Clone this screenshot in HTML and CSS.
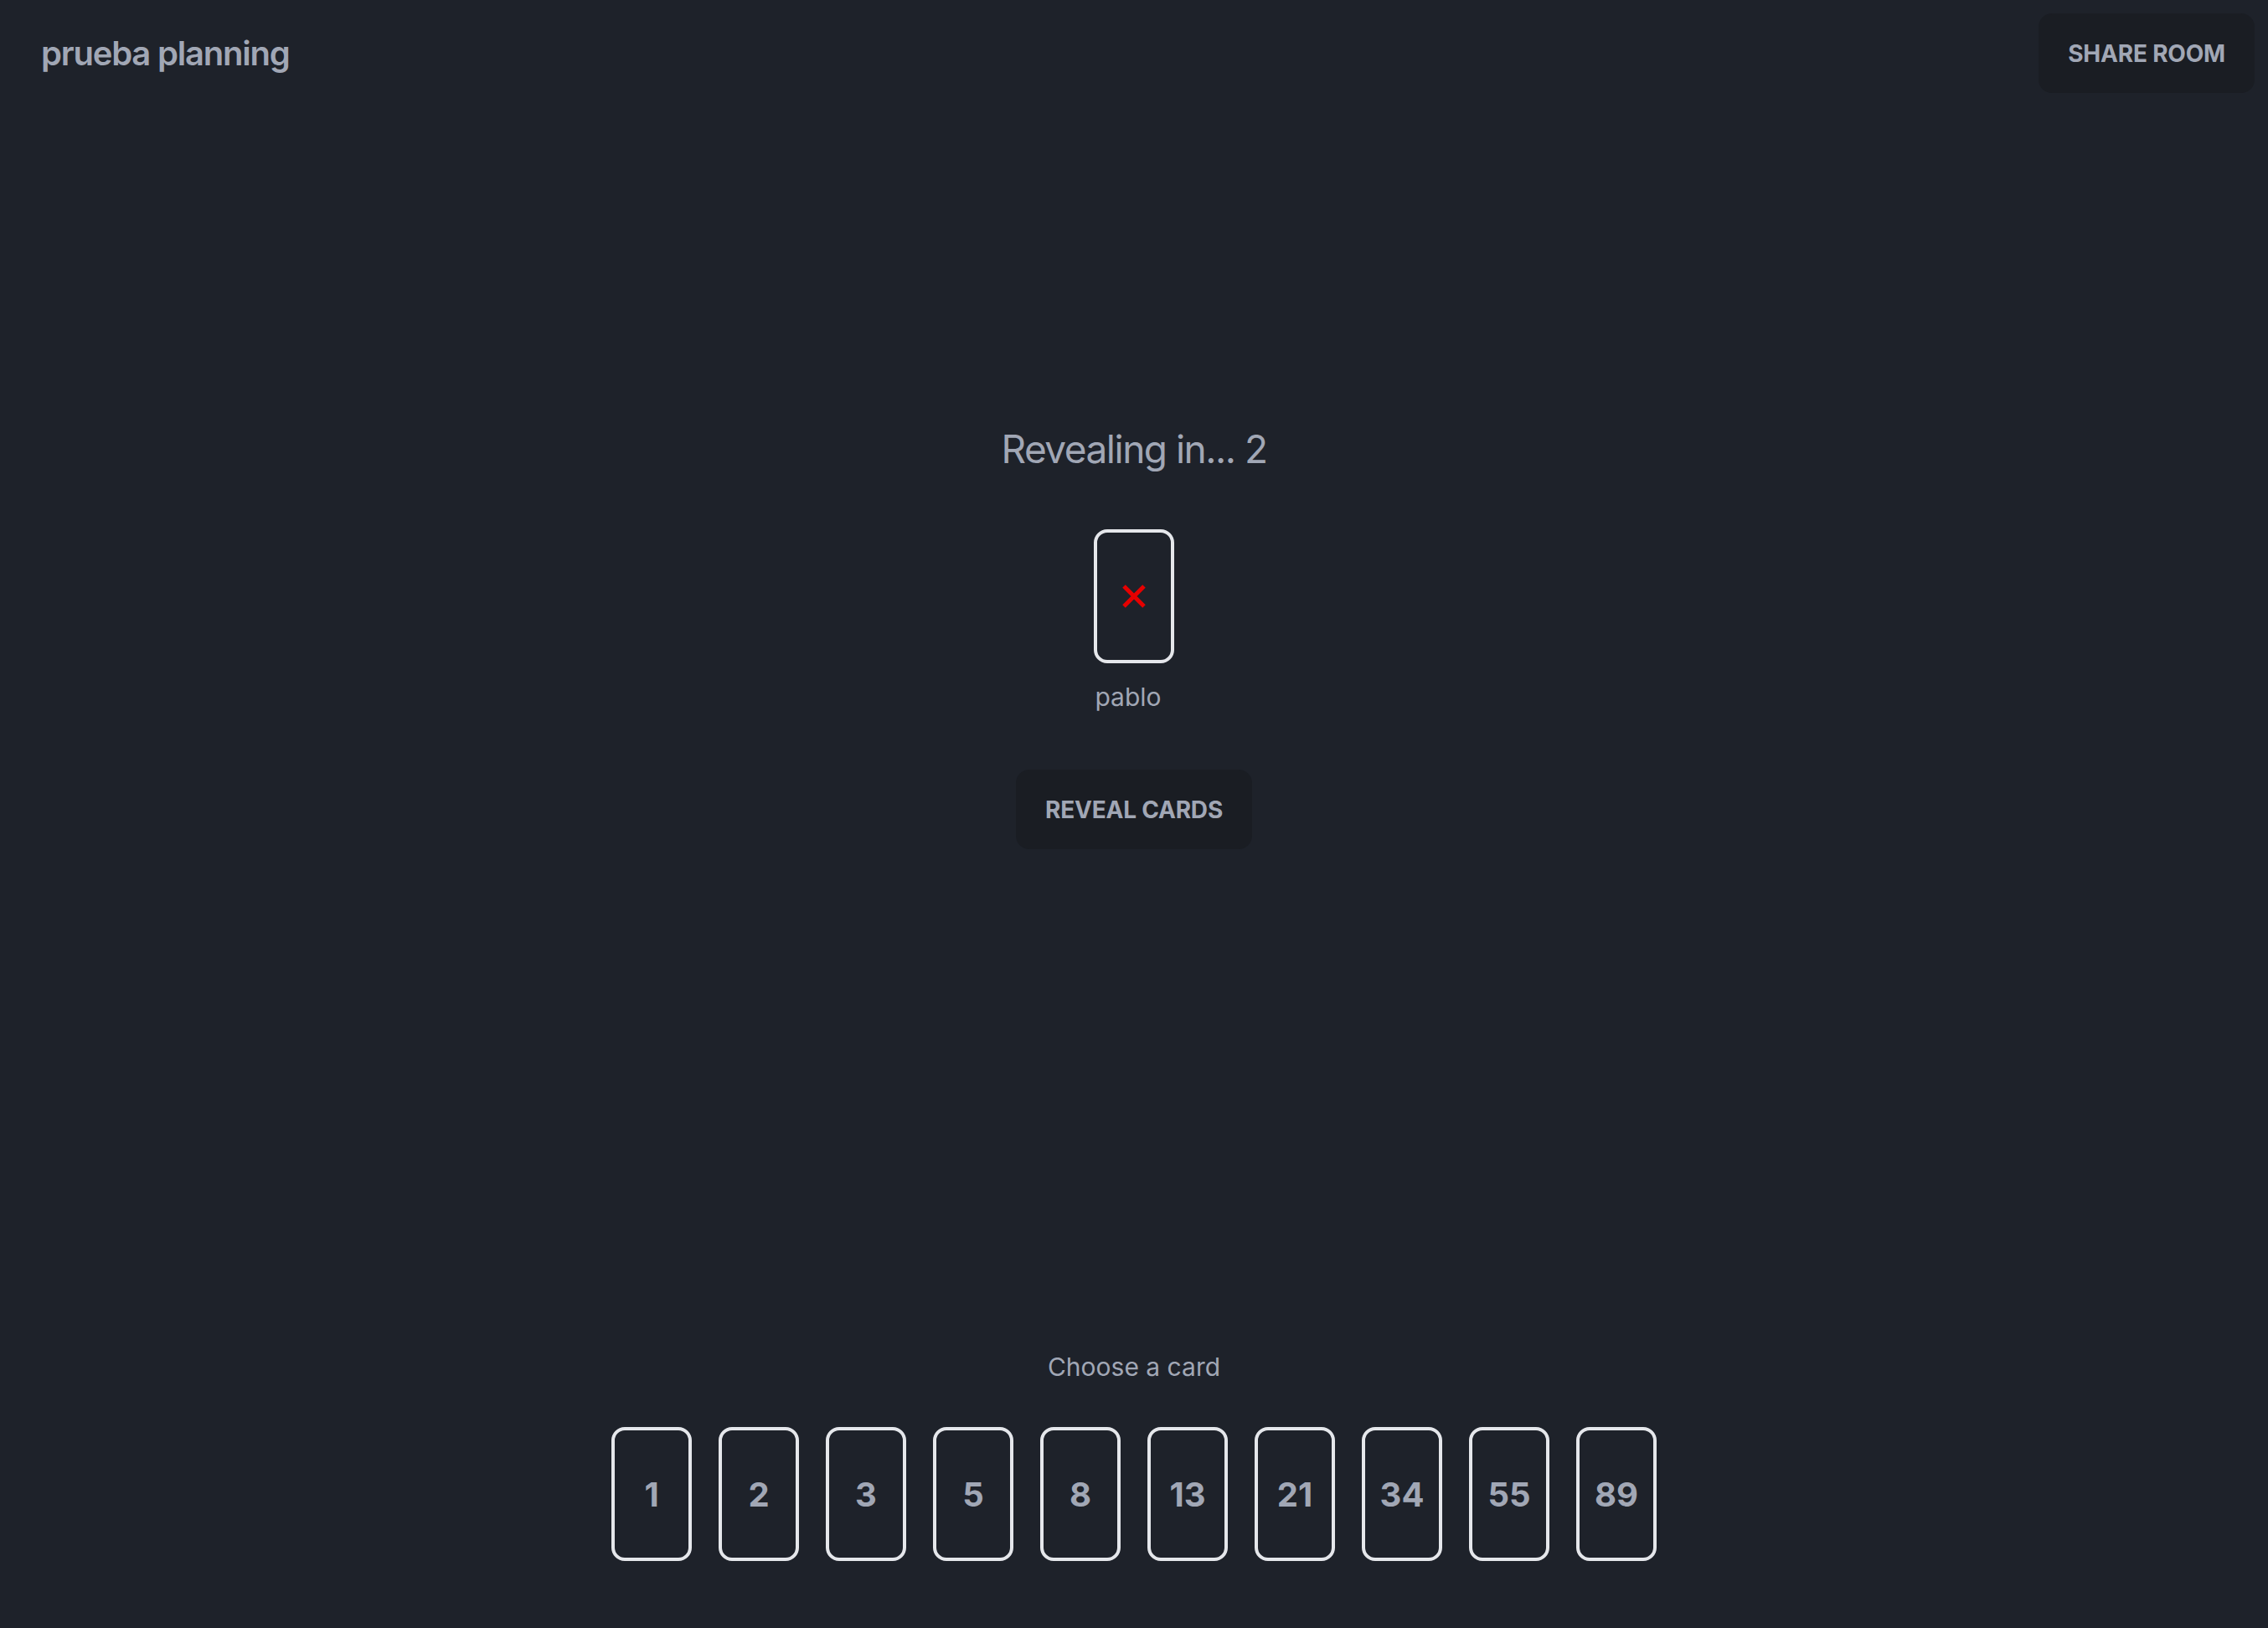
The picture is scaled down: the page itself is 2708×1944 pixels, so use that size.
FILE: index.html
```html
<!DOCTYPE html>
<html lang="es">
<head>
<meta charset="utf-8">
<title>prueba planning</title>
<link rel="stylesheet" href="styles.css">
</head>
<body>
<div class="app">
  <header class="topbar">
    <h1 class="room-title">prueba planning</h1>
    <button class="btn">SHARE ROOM</button>
  </header>
  <main class="table">
    <h2 class="status">Revealing in... 2</h2>
    <div class="player">
      <div class="card card--voted">
        <svg class="x-icon" viewBox="0 0 32 32" width="32" height="32" aria-hidden="true">
          <path d="M4 4 L28 28 M28 4 L4 28" stroke="#e60000" stroke-width="5" fill="none"/>
        </svg>
      </div>
      <span class="player-name">pablo</span>
    </div>
    <button class="btn btn--reveal">REVEAL CARDS</button>
  </main>
  <footer class="deck">
    <p class="deck-label">Choose a card</p>
    <div class="deck-cards">
      <div class="card">1</div>
      <div class="card">2</div>
      <div class="card">3</div>
      <div class="card">5</div>
      <div class="card">8</div>
      <div class="card">13</div>
      <div class="card">21</div>
      <div class="card">34</div>
      <div class="card">55</div>
      <div class="card">89</div>
    </div>
  </footer>
</div>
</body>
</html>
```
FILE: styles.css
```css
* { box-sizing: border-box; }
html, body {
  margin: 0;
  height: 100%;
}
body {
  background: #1e222a;
  color: #a1a7b5;
  font-family: Inter, "Noto Sans", "Liberation Sans", sans-serif;
}
.app {
  height: 100vh;
  display: flex;
  flex-direction: column;
}
.topbar {
  display: flex;
  justify-content: space-between;
  align-items: center;
  padding: 16px 16px 16px 49px;
}
.room-title {
  margin: 0;
  font-size: 40px;
  line-height: 56px;
  font-weight: 600;
  letter-spacing: -1.2px;
}
.btn {
  height: 95px;
  padding: 0 35px;
  border: none;
  border-radius: 16px;
  background: #1a1d23;
  color: #a1a7b5;
  font-family: inherit;
  font-size: 28px;
  font-weight: 700;
  letter-spacing: -0.2px;
}
.table {
  display: flex;
  flex-direction: column;
  align-items: center;
  padding-top: 377px;
}
.status {
  margin: 0;
  font-size: 46px;
  line-height: 64px;
  font-weight: 400;
  letter-spacing: -1.5px;
}
.player {
  margin-top: 64px;
  display: flex;
  flex-direction: column;
  align-items: center;
}
.card {
  width: 96px;
  height: 160px;
  border: 4px solid #e5e7eb;
  border-radius: 16px;
  display: flex;
  align-items: center;
  justify-content: center;
  font-size: 40px;
  font-weight: 700;
}
.player-name {
  margin-top: 20px;
  padding-right: 14px;
  font-size: 30px;
  line-height: 40px;
}
.btn--reveal {
  margin-top: 67px;
}
.deck {
  margin-top: auto;
  padding-bottom: 80px;
  display: flex;
  flex-direction: column;
  align-items: center;
}
.deck-label {
  margin: 0 0 52px;
  font-size: 30px;
  line-height: 40px;
}
.deck-cards {
  display: flex;
  gap: 32px;
}
```
